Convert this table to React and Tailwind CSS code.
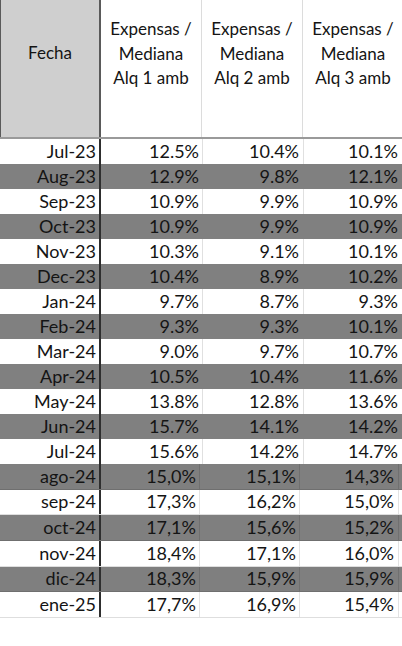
const top = [
  ["Jul-23", "12.5%", "10.4%", "10.1%"],
  ["Aug-23", "12.9%", "9.8%", "12.1%"],
  ["Sep-23", "10.9%", "9.9%", "10.9%"],
  ["Oct-23", "10.9%", "9.9%", "10.9%"],
  ["Nov-23", "10.3%", "9.1%", "10.1%"],
  ["Dec-23", "10.4%", "8.9%", "10.2%"],
  ["Jan-24", "9.7%", "8.7%", "9.3%"],
  ["Feb-24", "9.3%", "9.3%", "10.1%"],
  ["Mar-24", "9.0%", "9.7%", "10.7%"],
  ["Apr-24", "10.5%", "10.4%", "11.6%"],
  ["May-24", "13.8%", "12.8%", "13.6%"],
  ["Jun-24", "15.7%", "14.1%", "14.2%"],
  ["Jul-24", "15.6%", "14.2%", "14.7%"],
];

const bottom = [
  ["ago-24", "15,0%", "15,1%", "14,3%"],
  ["sep-24", "17,3%", "16,2%", "15,0%"],
  ["oct-24", "17,1%", "15,6%", "15,2%"],
  ["nov-24", "18,4%", "17,1%", "16,0%"],
  ["dic-24", "18,3%", "15,9%", "15,9%"],
  ["ene-25", "17,7%", "16,9%", "15,4%"],
];

const font = { fontFamily: "Lato, 'Open Sans', sans-serif" };

export default function App() {
  return (
    <div className="w-[402px] h-[646px] bg-white text-[#141414] overflow-hidden" style={font}>
      {/* Header */}
      <div className="flex h-[139px] border-b-2 border-[#9a9a9a] text-[17px] leading-[24.5px]">
        <div className="w-[101px] shrink-0 bg-[#cfcfcf] border-l border-r-2 border-[#5a5a5a] flex justify-center pt-[41px]">
          Fecha
        </div>
        {["1", "2", "3"].map((n) => (
          <div
            key={n}
            className="w-[101px] shrink-0 border-r border-[#dcdcdc] flex flex-col items-center pt-[17px] text-center"
          >
            <span>Expensas /</span>
            <span>Mediana</span>
            <span>Alq {n} amb</span>
          </div>
        ))}
      </div>

      {/* Rows Jul-23 .. Jul-24 */}
      {top.map((r, i) => (
        <div
          key={r[0]}
          className={`flex h-[25px] items-center text-[18px] ${i % 2 ? "bg-[#808080]" : "bg-white"}`}
        >
          <div className="w-[101px] h-full shrink-0 border-r-2 border-[#2e2e2e] flex items-center justify-end pr-[3px]">
            {r[0]}
          </div>
          <div className="w-[101px] h-full shrink-0 flex items-center justify-end pr-[3px]">{r[1]}</div>
          <div className={`w-[101px] h-full shrink-0 flex items-center justify-end pr-[4px] ${i % 2 ? "" : "border-l border-[#e0e0e0]"}`}>
            {r[2]}
          </div>
          <div className={`w-[99px] h-full shrink-0 flex items-center justify-end pr-[4px] ${i % 2 ? "" : "border-l border-[#e0e0e0]"}`}>
            {r[3]}
          </div>
        </div>
      ))}

      {/* Rows ago-24 .. ene-25 */}
      {bottom.map((r, i) => (
        <div
          key={r[0]}
          className={`flex h-[25.67px] items-center text-[18px] border-b ${
            i % 2 ? "bg-white border-[#dedede]" : "bg-[#7f7f7f] border-[#6f6f6f]"
          }`}
        >
          <div className="w-[101px] h-full shrink-0 border-r-2 border-[#2e2e2e] flex items-center justify-end pr-[3px]">
            {r[0]}
          </div>
          <div className="w-[98px] h-full shrink-0 flex items-center justify-end pr-[3px]">{r[1]}</div>
          <div className={`w-[100px] h-full shrink-0 border-l flex items-center justify-end pr-[3px] ${i % 2 ? "border-[#e3e3e3]" : "border-[#707070]"}`}>
            {r[2]}
          </div>
          <div className={`w-[100px] h-full shrink-0 border-l border-r flex items-center justify-end pr-[4px] ${i % 2 ? "border-[#e3e3e3]" : "border-[#707070]"}`}>
            {r[3]}
          </div>
        </div>
      ))}
    </div>
  );
}
